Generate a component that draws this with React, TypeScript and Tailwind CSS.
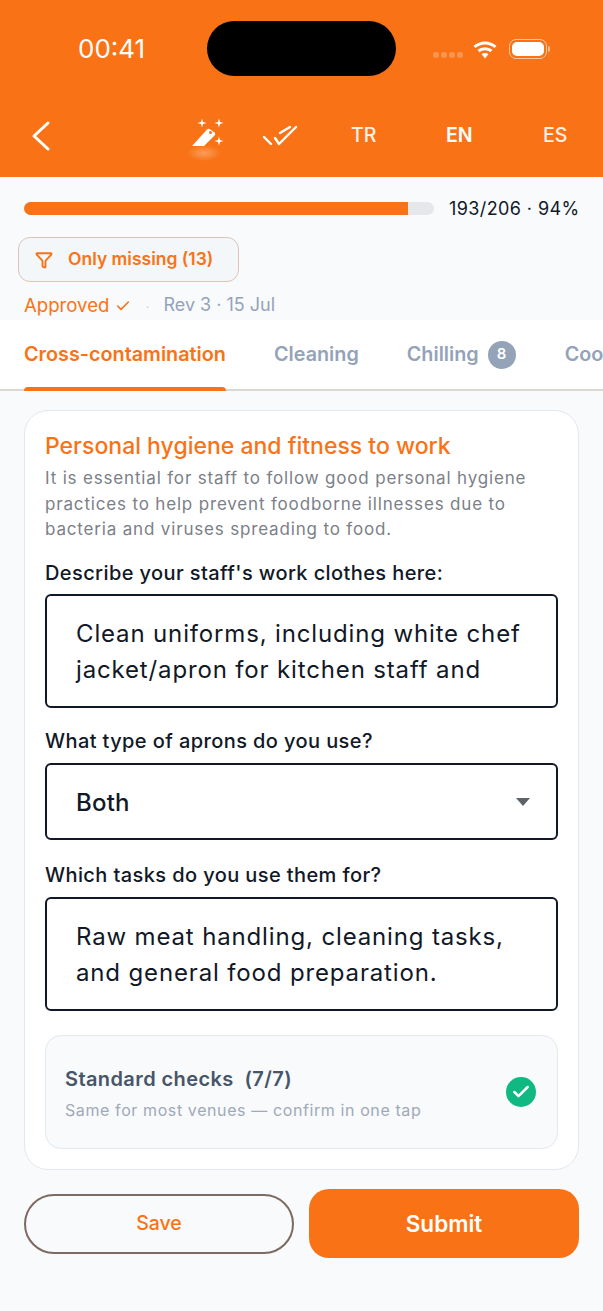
import { Filter, Check } from 'lucide-react';

function WandIcon() {
  return (
    <svg width="48" height="50" viewBox="0 0 48 50" fill="white">
      <defs>
        <radialGradient id="wandGlow">
          <stop offset="0%" stopColor="white" stopOpacity="0.3" />
          <stop offset="100%" stopColor="white" stopOpacity="0" />
        </radialGradient>
      </defs>
      <ellipse cx="24" cy="42" rx="17" ry="8" fill="url(#wandGlow)" />
      {/* wand body, cut off at the bottom */}
      <path d="M12 35 L27 18.5 Q28.5 17.2 30 18.2 L34.5 21.5 Q35.8 22.8 35 24 L24 35 Z" />
      <circle cx="30.5" cy="21.5" r="1.5" fill="#f97316" />
      <path d="M22 7.5 L23 11 L26.5 12 L23 13 L22 16.5 L21 13 L17.5 12 L21 11 Z" />
      <path d="M39 7.5 L40 11 L43.5 12 L40 13 L39 16.5 L38 13 L34.5 12 L38 11 Z" />
      <path d="M39 25.5 L40 29 L43.5 30 L40 31 L39 34.5 L38 31 L34.5 30 L38 29 Z" />
    </svg>
  );
}

function DoubleCheckIcon() {
  return (
    <svg width="36" height="24" viewBox="0 0 36 24" fill="none" stroke="white" strokeWidth="2.4" strokeLinecap="round" strokeLinejoin="round">
      <path d="M2 13 L9 20" />
      <path d="M13 14 L17 20 L34 3" />
      <path d="M18 9 L28 3" />
    </svg>
  );
}

function WifiIcon() {
  return (
    <svg width="24" height="19" viewBox="0 0 24 19" fill="none" stroke="white" strokeWidth="3">
      <path d="M1.5 7 C7.5 1.5 16.5 1.5 22.5 7" />
      <path d="M5.5 11 C9 8 15 8 18.5 11" />
      <path d="M8.5 14 L12 18.5 L15.5 14 C13.5 12.6 10.5 12.6 8.5 14 Z" fill="white" stroke="none" />
    </svg>
  );
}

export default function App() {
  return (
    <div className="w-[603px] h-[1311px] bg-[#f8fafc] overflow-hidden font-['Inter',sans-serif]">
      {/* orange header */}
      <div className="h-[177px] bg-[#f97316] flex flex-col">
        <div className="h-[76px] pt-[21px] pl-[78px] flex items-start">
          <span className="w-[129px] pt-[12px] text-[26px] leading-[32px] text-white">00:41</span>
          <div className="w-[189px] h-[55px] rounded-[28px] bg-black" />
          <div className="flex items-center pl-[37px] pt-[18px]">
            <div className="flex gap-[2px] pt-[12px]">
              <span className="w-[6px] h-[6px] rounded-full bg-white/25" />
              <span className="w-[6px] h-[6px] rounded-full bg-white/25" />
              <span className="w-[6px] h-[6px] rounded-full bg-white/25" />
              <span className="w-[6px] h-[6px] rounded-full bg-white/25" />
            </div>
            <div className="ml-[10px]"><WifiIcon /></div>
            <div className="flex items-center ml-[12px]">
              <div className="w-[38px] h-[20px] rounded-[7px] border-[1.5px] border-white/60 p-[2px]">
                <div className="w-full h-full rounded-[5px] bg-white" />
              </div>
              <div className="w-[2px] h-[6px] ml-[1px] rounded-r bg-white/50" />
            </div>
          </div>
        </div>
        <div className="flex-1 flex items-center pl-[30px] pt-[18px]">
          <svg width="24" height="32" viewBox="0 0 24 32" fill="none" stroke="white" strokeWidth="3" strokeLinecap="round" strokeLinejoin="round">
            <path d="M18 3 L4 16 L18 29" />
          </svg>
          <div className="ml-[126px]"><WandIcon /></div>
          <div className="ml-[34px]"><DoubleCheckIcon /></div>
          <span className="ml-[53px] w-[95px] text-[19.5px] font-medium text-white/90">TR</span>
          <span className="w-[97px] text-[19.5px] font-semibold text-white">EN</span>
          <span className="text-[19.5px] font-medium text-white/90">ES</span>
        </div>
      </div>

      {/* progress */}
      <div className="flex items-center gap-[15px] pl-[24px] pt-[22px]">
        <div className="w-[410px] h-[13px] rounded-full bg-[#e5e7eb] overflow-hidden">
          <div className="w-[384px] h-full bg-[#f97316]" />
        </div>
        <span className="pt-[1px] text-[18px] leading-[18px] tracking-[0.4px] text-[#111827]">193/206 · 94%</span>
      </div>

      {/* filter + status */}
      <div className="pl-[18px] pt-[19px]">
        <div className="w-[221px] h-[45px] rounded-[12px] border border-[#dcc5b6] bg-[#f4f7fa] flex items-center pl-[16px] gap-[15px]">
          <Filter size={18} className="text-[#f97316]" strokeWidth={2.5} />
          <span className="text-[17.5px] font-semibold text-[#f97316]">Only missing (13)</span>
        </div>
      </div>
      <div className="flex items-center pl-[24px] h-[30px] mt-[9px] text-[18px]">
        <span className="text-[18.6px] text-[#f97316]">Approved</span>
        <Check size={16} className="ml-[6px] text-[#f97316]" strokeWidth={2.4} />
        <span className="ml-[14px] text-[#cbd5e1] text-[14px]">·</span>
        <span className="ml-[14px] pb-[3px] text-[#94a3b8]">Rev 3 · 15 Jul</span>
      </div>

      {/* tabs */}
      <div className="h-[71px] mt-[-1px] bg-white border-b-2 border-[#ded6d0] flex items-stretch pl-[24px] text-[19.8px] font-semibold">
        <div className="relative w-[202px] shrink-0 flex items-center text-[#f97316] whitespace-nowrap">
          Cross-contamination
          <div className="absolute left-0 right-0 bottom-[-2px] h-[4px] rounded-t-[4px] bg-[#f97316]" />
        </div>
        <div className="ml-[48px] shrink-0 flex items-center text-[#94a3b8]">Cleaning</div>
        <div className="ml-[48px] shrink-0 flex items-center gap-[9px] text-[#94a3b8]">
          Chilling
          <span className="w-[28px] h-[28px] rounded-full bg-[#94a3b8] text-white text-[15px] flex items-center justify-center">8</span>
        </div>
        <div className="ml-[49px] shrink-0 flex items-center text-[#94a3b8]">Cooking</div>
      </div>

      {/* form card */}
      <div className="mx-[24px] mt-[19px] h-[760px] rounded-[24px] border border-[#e2e8f0] bg-white px-[20px] pt-[19px]">
        <h2 className="text-[23px] leading-[32px] font-medium text-[#f97316]">Personal hygiene and fitness to work</h2>
        <p className="mt-[4px] text-[17px] leading-[25.5px] tracking-[0.83px] text-[#7b8087]">
          It is essential for staff to follow good personal hygiene practices to help prevent foodborne illnesses due to bacteria and viruses spreading to food.
        </p>
        <label className="block mt-[16px] text-[20px] leading-[28px] tracking-[0.4px] font-medium text-[#111827]">Describe your staff's work clothes here:</label>
        <div className="mt-[7px] h-[114px] rounded-[6px] border-2 border-[#111827] px-[29px] py-[20px] text-[24px] leading-[36px] tracking-[0.85px] text-[#111827]">
          Clean uniforms, including white chef jacket/apron for kitchen staff and
        </div>
        <label className="block mt-[19px] text-[20px] leading-[28px] tracking-[0.4px] font-medium text-[#111827]">What type of aprons do you use?</label>
        <div className="mt-[8px] h-[77px] rounded-[6px] border-2 border-[#111827] pl-[29px] pr-[26px] flex items-center justify-between text-[24px] font-medium tracking-[0.2px] text-[#111827]">
          <span className="pt-[4px]">Both</span>
          <span className="mt-[2px] w-0 h-0 border-x-[7px] border-x-transparent border-t-[8px] border-t-[#5f6368]" />
        </div>
        <label className="block mt-[21px] text-[20px] leading-[28px] tracking-[0.4px] font-medium text-[#111827]">Which tasks do you use them for?</label>
        <div className="mt-[8px] h-[114px] rounded-[6px] border-2 border-[#111827] px-[29px] py-[20px] text-[24px] leading-[36px] tracking-[0.85px] text-[#111827]">
          Raw meat handling, cleaning tasks, and general food preparation.
        </div>
        <div className="mt-[24px] h-[114px] rounded-[16px] border border-[#e2e8f0] bg-[#f8fafc] pl-[19px] pr-[21px] flex items-center justify-between">
          <div className="pt-[4px]">
            <div className="text-[20px] leading-[28px] tracking-[0.4px] font-semibold text-[#475569] whitespace-pre">Standard checks  (7/7)</div>
            <div className="mt-[5px] text-[16px] leading-[24px] tracking-[0.6px] text-[#a0a9b8]">Same for most venues — confirm in one tap</div>
          </div>
          <div className="w-[30px] h-[30px] rounded-full bg-[#10b981] flex items-center justify-center">
            <Check size={20} strokeWidth={3} className="text-white" />
          </div>
        </div>
      </div>

      {/* actions */}
      <div className="flex items-center gap-[15px] px-[24px] mt-[19px]">
        <button className="w-[270px] h-[60px] rounded-full border-2 border-[#7d6a60] text-[19.5px] font-medium text-[#f97316]">Save</button>
        <button className="w-[270px] h-[69px] rounded-[20px] bg-[#f97316] text-[22.5px] font-semibold text-white">Submit</button>
      </div>
    </div>
  );
}
